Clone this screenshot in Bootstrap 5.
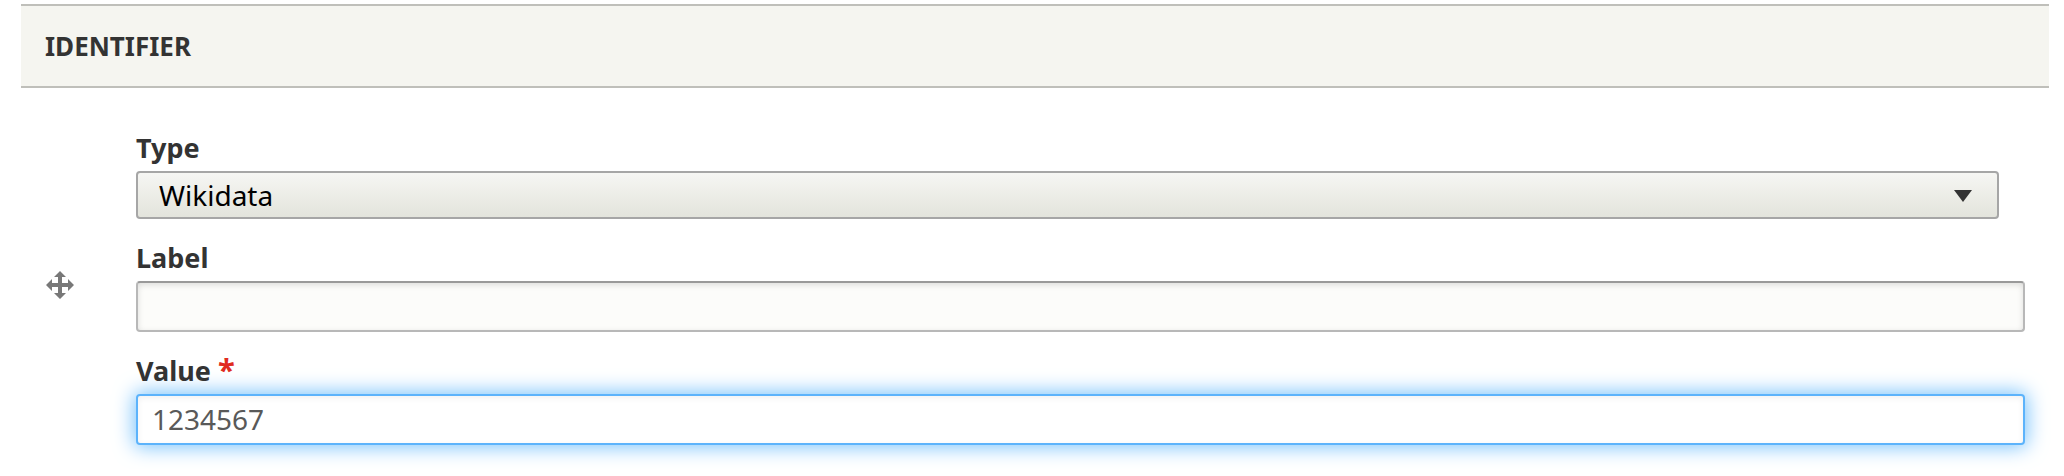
<!DOCTYPE html>
<html lang="en">
<head>
<meta charset="utf-8">
<meta name="viewport" content="width=device-width, initial-scale=1">
<title>Identifier</title>
<link href="https://cdn.jsdelivr.net/npm/bootstrap@5.3.0/dist/css/bootstrap.min.css" rel="stylesheet">
<style>
body { font-family: "Noto Sans", "Open Sans", sans-serif; color: #333; background: #fff; }
.field-group { padding: 4px 15px 24px 21px; }
.group-head { background: #f5f5f0; border: solid #bfbfba; border-width: 2px 0; padding: 24px; }
.group-title { font-size: 26px; line-height: 32px; }
.group-body { padding: 44px 24px 0 25px; }
.drag-handle { width: 28px; height: 28px; margin-right: 62px; color: #787878; }
.field-list { gap: 23px; }
.field-label { font-size: 27px; line-height: 32px; margin-bottom: 7px; }
.required-mark { color: #e02a20; font-size: 31px; line-height: 0; }
.form-control, .form-select { border-radius: 4px; border-width: 2px; padding-top: 0; padding-bottom: 0; }
.type-select { width: calc(100% - 26px); height: 48px; padding-left: 21px; font-size: 28px; line-height: 40px; color: #000; border-color: #a6a6a6;
  background: url("data:image/svg+xml,%3Csvg xmlns='http://www.w3.org/2000/svg' viewBox='0 0 18 12'%3E%3Cpath d='M0 0h18L9 12z' fill='%23333'/%3E%3C/svg%3E") no-repeat right 25px top 17px / 18px 12px, linear-gradient(#f6f6f3, #e3e4dc); }
.text-input { height: 51px; padding-left: 14px; font-size: 28px; line-height: 40px; color: #595959; background: #fcfcfa; border-color: #999 #b8b8b8 #b8b8b8; box-shadow: inset 0 2px 6px rgba(0,0,0,.13); }
.text-input.active, .text-input:focus { padding-bottom: 2px; color: #595959; background: #fff; border-color: #5cb3fb; box-shadow: 0 0 20px 2px #78c2fb, inset 0 2px 6px rgba(0,0,0,.06); }
</style>
</head>
<body>
<form class="field-group">
  <div class="group-head"><h4 class="group-title fw-bold text-uppercase m-0">Identifier</h4></div>
  <div class="group-body d-flex align-items-center">
    <button type="button" class="drag-handle btn border-0 p-0 mb-2 d-flex flex-shrink-0" aria-label="Drag to re-order">
      <svg width="28" height="28" viewBox="0 0 28 28" fill="currentColor" aria-hidden="true"><path d="M14 0 20 6H16V12H22V8L28 14 22 20V16H16V22H20L14 28 8 22H12V16H6V20L0 14 6 8V12H12V6H8Z"/></svg>
    </button>
    <div class="field-list d-flex flex-column flex-grow-1">
      <div>
        <label class="field-label fw-bold d-block" for="type">Type</label>
        <select class="form-select type-select" id="type"><option selected>Wikidata</option></select>
      </div>
      <div>
        <label class="field-label fw-bold d-block" for="label">Label</label>
        <input class="form-control text-input" id="label" type="text">
      </div>
      <div>
        <label class="field-label fw-bold d-block" for="value">Value <span class="required-mark">*</span></label>
        <input class="form-control text-input active" id="value" type="text" value="1234567" required>
      </div>
    </div>
  </div>
</form>
<script src="https://cdn.jsdelivr.net/npm/bootstrap@5.3.0/dist/js/bootstrap.bundle.min.js"></script>
</body>
</html>
